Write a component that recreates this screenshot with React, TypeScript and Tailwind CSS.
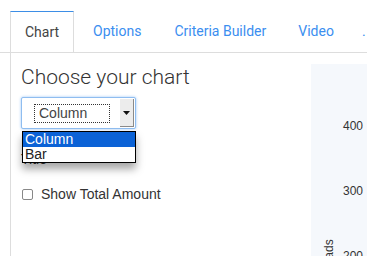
import React from "react";

const tabs = [
  { label: "Options", pad: "pl-[19px] pr-[16px]" },
  { label: "Criteria Builder", pad: "pl-[17px] pr-[16px]" },
  { label: "Video", pad: "pl-[16px] pr-[17px]" },
];

function Tabs() {
  return (
    <div className="flex h-[42px] items-end overflow-hidden border-b border-[#dddddd] pl-[10px]">
      <div className="relative -mb-px flex h-[42px] w-[64px] shrink-0 items-center justify-center border border-[#dddddd] border-t-[#3d8ee6] border-b-white bg-white text-[14px] text-[#444]">
        Chart
      </div>
      {tabs.map((tab) => (
        <div
          key={tab.label}
          className={`flex h-[41px] shrink-0 items-center whitespace-nowrap text-[14px] text-[#3b8ef0] ${tab.pad}`}
        >
          {tab.label}
        </div>
      ))}
      <div className="flex h-[41px] shrink-0 items-center pl-[11px] text-[14px] text-[#3b8ef0]">.</div>
    </div>
  );
}

function ChartSelect() {
  return (
    <div className="relative mt-[8px] h-[32px] w-[115px]">
      <div className="flex h-[32px] w-[115px] items-center rounded-[2px] border border-[#8fbdf0] bg-white shadow-[0_0_3px_#9cc6f5]">
        <div className="ml-[12px] flex h-[19px] w-[76px] items-center border border-dotted border-[#333] pl-[4px] text-[14px] text-[#444] [font-family:'Liberation_Sans',Arial,sans-serif]">
          Column
        </div>
        <div className="ml-auto mr-px flex h-[28px] w-[14px] items-center justify-center border-r border-b border-[#8a8a8a] bg-[#ececec]">
          <svg width="7" height="4" viewBox="0 0 7 4">
            <path d="M0 0h7L3.5 4z" fill="#111" />
          </svg>
        </div>
      </div>
      <div className="absolute left-px top-[34px] z-10 w-[114px] border border-black bg-white text-[14px] leading-[15px] shadow-[0_6px_8px_rgba(0,0,0,0.35)] [font-family:'Liberation_Sans',Arial,sans-serif]">
        <div className="bg-[#0b62d6] px-[2px] text-white">Column</div>
        <div className="px-[2px] text-[#222]">Bar</div>
      </div>
    </div>
  );
}

export default function App() {
  return (
    <div className="h-[256px] w-[367px] overflow-hidden bg-white [font-family:Roboto,'Liberation_Sans',sans-serif]">
      <div className="pt-[11px]">
        <Tabs />
      </div>
      <div className="ml-[10px] flex h-[204px] border-l border-[#dddddd]">
        <div className="w-[300px] pl-[10px] pt-[12px]">
          <h2 className="text-[21px] font-light leading-[24px] text-[#333]">Choose your chart</h2>
          <ChartSelect />
          <div className="mt-[22px] text-[14px] leading-[16px] text-[#333] [font-family:'Liberation_Sans',Arial,sans-serif]">
            Title
          </div>
          <label className="mt-[17px] flex items-center gap-[8px] pl-px text-[14px] text-[#333] [font-family:'Liberation_Sans',Arial,sans-serif]">
            <span className="h-[11px] w-[11px] rounded-[2px] border border-[#888] bg-white" />
            Show Total Amount
          </label>
        </div>
        <div className="relative mt-[11px] flex-1 bg-[#f5f8fc] text-[12px] text-[#333] [font-family:'Liberation_Sans',Arial,sans-serif]">
          <div className="absolute left-[32px] top-[53px]">400</div>
          <div className="absolute left-[32px] top-[118px]">300</div>
          <div className="absolute left-[32px] top-[183px]">200</div>
          <div className="absolute left-[27px] top-[178px] origin-bottom-left -rotate-90 whitespace-nowrap translate-y-[12px]">
            Leads
          </div>
        </div>
      </div>
    </div>
  );
}
